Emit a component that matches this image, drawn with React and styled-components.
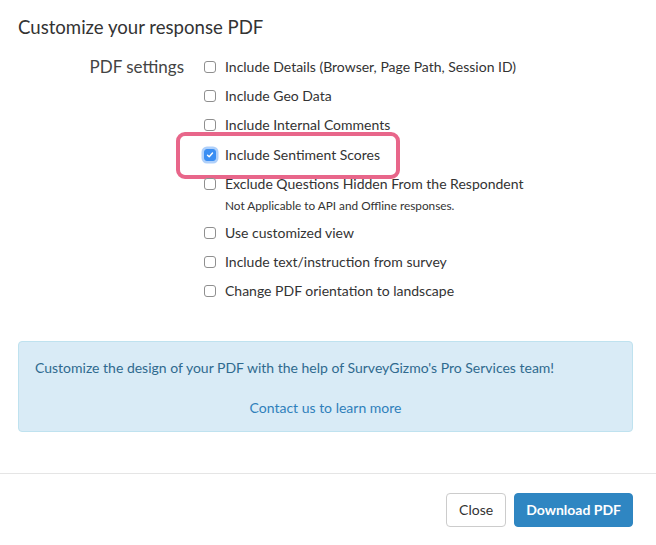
import React, { useState } from "react";
import styled, { createGlobalStyle } from "styled-components";

const GlobalStyle = createGlobalStyle`
  html, body {
    margin: 0;
    padding: 0;
    background: #fff;
    font-family: Lato, "Open Sans", sans-serif;
    color: #333;
  }
`;

const options = [
  { id: "details", label: "Include Details (Browser, Page Path, Session ID)" },
  { id: "geo", label: "Include Geo Data" },
  { id: "comments", label: "Include Internal Comments" },
  { id: "sentiment", label: "Include Sentiment Scores", highlight: true },
  {
    id: "hidden",
    label: "Exclude Questions Hidden From the Respondent",
    note: "Not Applicable to API and Offline responses.",
  },
  { id: "custom", label: "Use customized view" },
  { id: "text", label: "Include text/instruction from survey" },
  { id: "landscape", label: "Change PDF orientation to landscape" },
];

export default function App() {
  const [checked, setChecked] = useState({ sentiment: true });

  const toggle = (id) => {
    setChecked({ ...checked, [id]: !checked[id] });
  };

  return (
    <>
      <GlobalStyle />
      <Modal>
        <Body>
          <Title>Customize your response PDF</Title>
          <Settings>
            <SettingsLabel>PDF settings</SettingsLabel>
            <OptionList>
              {options.map((opt) => (
                <Option key={opt.id} note={!!opt.note}>
                  <OptionLine highlight={opt.highlight}>
                    <Box
                      checked={!!checked[opt.id]}
                      onClick={() => toggle(opt.id)}
                    >
                      {checked[opt.id] && (
                        <svg width="8" height="8" viewBox="0 0 8 8">
                          <path
                            d="M1.5 4.2 L3.2 5.8 L6.5 2"
                            fill="none"
                            stroke="#fff"
                            strokeWidth="1.4"
                            strokeLinecap="round"
                            strokeLinejoin="round"
                          />
                        </svg>
                      )}
                    </Box>
                    <OptionText>{opt.label}</OptionText>
                  </OptionLine>
                  {opt.note && <Note>{opt.note}</Note>}
                </Option>
              ))}
            </OptionList>
          </Settings>
          <InfoBox>
            <InfoText>
              Customize the design of your PDF with the help of SurveyGizmo's Pro
              Services team!
            </InfoText>
            <InfoLink href="#">Contact us to learn more</InfoLink>
          </InfoBox>
        </Body>
        <Footer>
          <Button>Close</Button>
          <Button primary>Download PDF</Button>
        </Footer>
      </Modal>
    </>
  );
}

const Modal = styled.div`
  width: 656px;
  height: 545px;
  background: #fff;
`;

const Body = styled.div`
  padding: 14px 23px 41px 18px;
  border-bottom: 1px solid #e5e5e5;
`;

const Title = styled.h4`
  margin: 0;
  font-size: 18.6px;
  font-weight: 400;
  line-height: 26px;
  color: #333;
`;

const Settings = styled.div`
  display: flex;
  margin-top: 14px;
`;

const SettingsLabel = styled.div`
  width: 166px;
  text-align: right;
  font-size: 17px;
  line-height: 26px;
  color: #444;
  padding-right: 20px;
  flex-shrink: 0;
`;

const OptionList = styled.div`
  display: flex;
  flex-direction: column;
  margin-top: 4px;
`;

const Option = styled.div`
  display: flex;
  flex-direction: column;
  height: ${(props) => (props.note ? "49.2px" : "29.2px")};
`;

const OptionLine = styled.div`
  display: flex;
  align-items: center;
  height: 18px;
  position: relative;
  &::before {
    content: "";
    display: ${(props) => (props.highlight ? "block" : "none")};
    position: absolute;
    left: -28px;
    top: -14px;
    width: 216px;
    height: 39px;
    border: 4px solid #e8668a;
    border-radius: 9px;
  }
`;

const Box = styled.span`
  width: 12px;
  height: 12px;
  box-sizing: border-box;
  border-radius: 3px;
  border: 1px solid ${(props) => (props.checked ? "#3a8ef3" : "#8f8f8f")};
  background: ${(props) => (props.checked ? "#3a8ef3" : "#fff")};
  box-shadow: ${(props) =>
    props.checked ? "0 0 0 2.5px rgba(110, 170, 245, 0.55)" : "none"};
  display: flex;
  align-items: center;
  justify-content: center;
  margin-right: 9px;
  cursor: pointer;
  flex-shrink: 0;
`;

const OptionText = styled.span`
  font-size: 14px;
  line-height: 18px;
  color: #333;
`;

const Note = styled.div`
  font-size: 11.8px;
  line-height: 14px;
  color: #333;
  padding-left: 21px;
  margin-top: 6px;
`;

const InfoBox = styled.div`
  margin-top: 29px;
  background: #d9ebf6;
  border: 1px solid #bfe2ef;
  border-radius: 4px;
  padding: 16px 16px 16px 16px;
  height: 91px;
  box-sizing: border-box;
`;

const InfoText = styled.p`
  margin: 0;
  font-size: 14px;
  line-height: 20px;
  color: #2f6a8f;
`;

const InfoLink = styled.a`
  display: block;
  text-align: center;
  margin-top: 20px;
  font-size: 14px;
  line-height: 20px;
  color: #2f80bb;
  text-decoration: none;
`;

const Footer = styled.div`
  display: flex;
  justify-content: flex-end;
  gap: 8px;
  padding: 19px 23px 0 0;
`;

const Button = styled.button`
  height: 34px;
  padding: 0 ${(props) => (props.primary ? "11px" : "12px")};
  font-family: Lato, "Open Sans", sans-serif;
  font-size: 14px;
  font-weight: ${(props) => (props.primary ? 700 : 400)};
  border-radius: 4px;
  border: 1px solid ${(props) => (props.primary ? "#2e85c1" : "#ccc")};
  background: ${(props) => (props.primary ? "#2f86c2" : "#fff")};
  color: ${(props) => (props.primary ? "#fff" : "#333")};
  cursor: pointer;
`;
